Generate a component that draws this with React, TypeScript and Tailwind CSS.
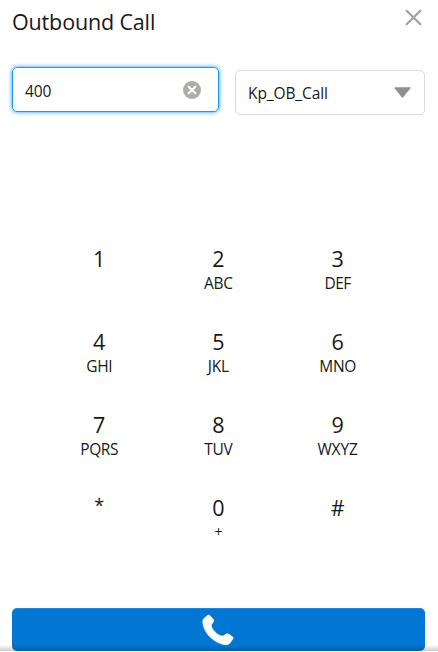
const keys = [
  { n: '1', l: '', w: '' },
  { n: '2', l: 'ABC', w: 'tracking-[-0.2px]' },
  { n: '3', l: 'DEF', w: 'tracking-[-0.5px]' },
  { n: '4', l: 'GHI', w: 'tracking-[-0.4px]' },
  { n: '5', l: 'JKL', w: 'tracking-[-0.2px]' },
  { n: '6', l: 'MNO', w: 'tracking-[-0.4px]' },
  { n: '7', l: 'PQRS', w: 'tracking-[-0.4px]' },
  { n: '8', l: 'TUV', w: 'tracking-[-0.2px]' },
  { n: '9', l: 'WXYZ', w: 'tracking-[-0.1px]' },
  { n: '*', l: '', w: '' },
  { n: '0', l: '+', w: '' },
  { n: '#', l: '', w: '' },
];

function Key({ n, l, w }: { n: string; l: string; w: string }) {
  return (
    <button className="flex h-[83px] flex-col items-center text-[#181818]">
      <span className={n === '*' ? 'h-[26px] text-[18px] leading-[20px]' : 'h-[26px] text-[21.5px] leading-[26px]'}>{n}</span>
      <span className={`h-[22px] leading-[22px] ${l === '+' ? 'text-[14px]' : 'text-[15.5px]'} ${w}`}>{l}</span>
    </button>
  );
}

export default function App() {
  return (
    <main className="flex h-[652px] w-[438px] flex-col overflow-hidden bg-white font-['Open_Sans','Noto_Sans',sans-serif] text-[#181818]">
      <header className="flex h-[67px] items-start justify-between pl-3 pr-4">
        <h1 className="pt-[7px] text-[21.5px] leading-[30px] tracking-[-0.15px]">Outbound Call</h1>
        <svg className="mt-[9px]" width="17" height="17" viewBox="0 0 17 17" fill="none" stroke="#a5a3a2" strokeWidth="2.3" strokeLinecap="round">
          <path d="M1.7 1.7 15.3 15.3M15.3 1.7 1.7 15.3" />
        </svg>
      </header>
      <div className="flex h-[177px] items-start gap-4 pl-3 pr-[13px]">
        <div className="flex h-[45px] w-[207px] items-center justify-between rounded-[5px] border border-[#1b96ff] pl-[12px] pr-[17px] shadow-[0_0_4px_#1b96ff]">
          <span className="pt-[2px] text-[15.5px] leading-6 tracking-[-0.1px]">400</span>
          <svg width="18" height="18" viewBox="0 0 18 18">
            <circle cx="9" cy="9" r="9" fill="#aeaba9" />
            <path d="M5.7 5.7 12.3 12.3M12.3 5.7 5.7 12.3" stroke="#fff" strokeWidth="2.2" strokeLinecap="round" />
          </svg>
        </div>
        <div className="mt-[3px] flex h-[45px] w-[190px] items-center justify-between rounded-[5px] border border-[#dddbda] pl-[12px] pr-[13px]">
          <span className="text-[15.5px] leading-6 tracking-[-0.1px]">Kp_OB_Call</span>
          <svg width="17" height="11" viewBox="0 0 17 11">
            <path d="M1 .3H16Q17 .6 16.3 1.5L9.2 10.3Q8.5 11 7.8 10.3L.7 1.5Q0 .6 1 .3Z" fill="#918f8e" />
          </svg>
        </div>
      </div>
      <section className="ml-[39.6px] mt-[2px] grid w-[357.6px] grid-cols-3">
        {keys.map((k) => (
          <Key key={k.n} {...k} />
        ))}
      </section>
      <footer className="mt-auto flex h-[44px] shrink-0 pb-px pl-3 pr-[13px]">
        <button className="flex h-[43px] w-full justify-center rounded-[5px] border-t border-[#2b83d3] bg-[#0176d3]">
          <svg className="mr-px mt-[5px]" width="32" height="32" viewBox="0 0 32 32">
            <path d="M2.2 4.2 5.7 1.3Q6.8.5 7.8 1.5L11.1 5.1Q12.2 6.2 11.5 7.7L9.3 10.9C9 14.8 15.7 22 20.9 22.1L24.4 20Q25.5 19.4 26.6 20.1L30.6 22.8Q31.7 23.7 30.9 24.8L28.2 28.7C26.7 30.8 24 31.1 21.2 30.4C10.8 28.1 1.1 17.9.8 8.1C.7 6.4 1.1 5.1 2.2 4.2Z" fill="#fff" stroke="#fff" strokeWidth="0.6" />
          </svg>
        </button>
      </footer>
      <div className="pointer-events-none absolute left-0 top-[645px] h-[6px] w-[438px] bg-linear-to-b from-black/0 to-black/20" />
    </main>
  );
}
